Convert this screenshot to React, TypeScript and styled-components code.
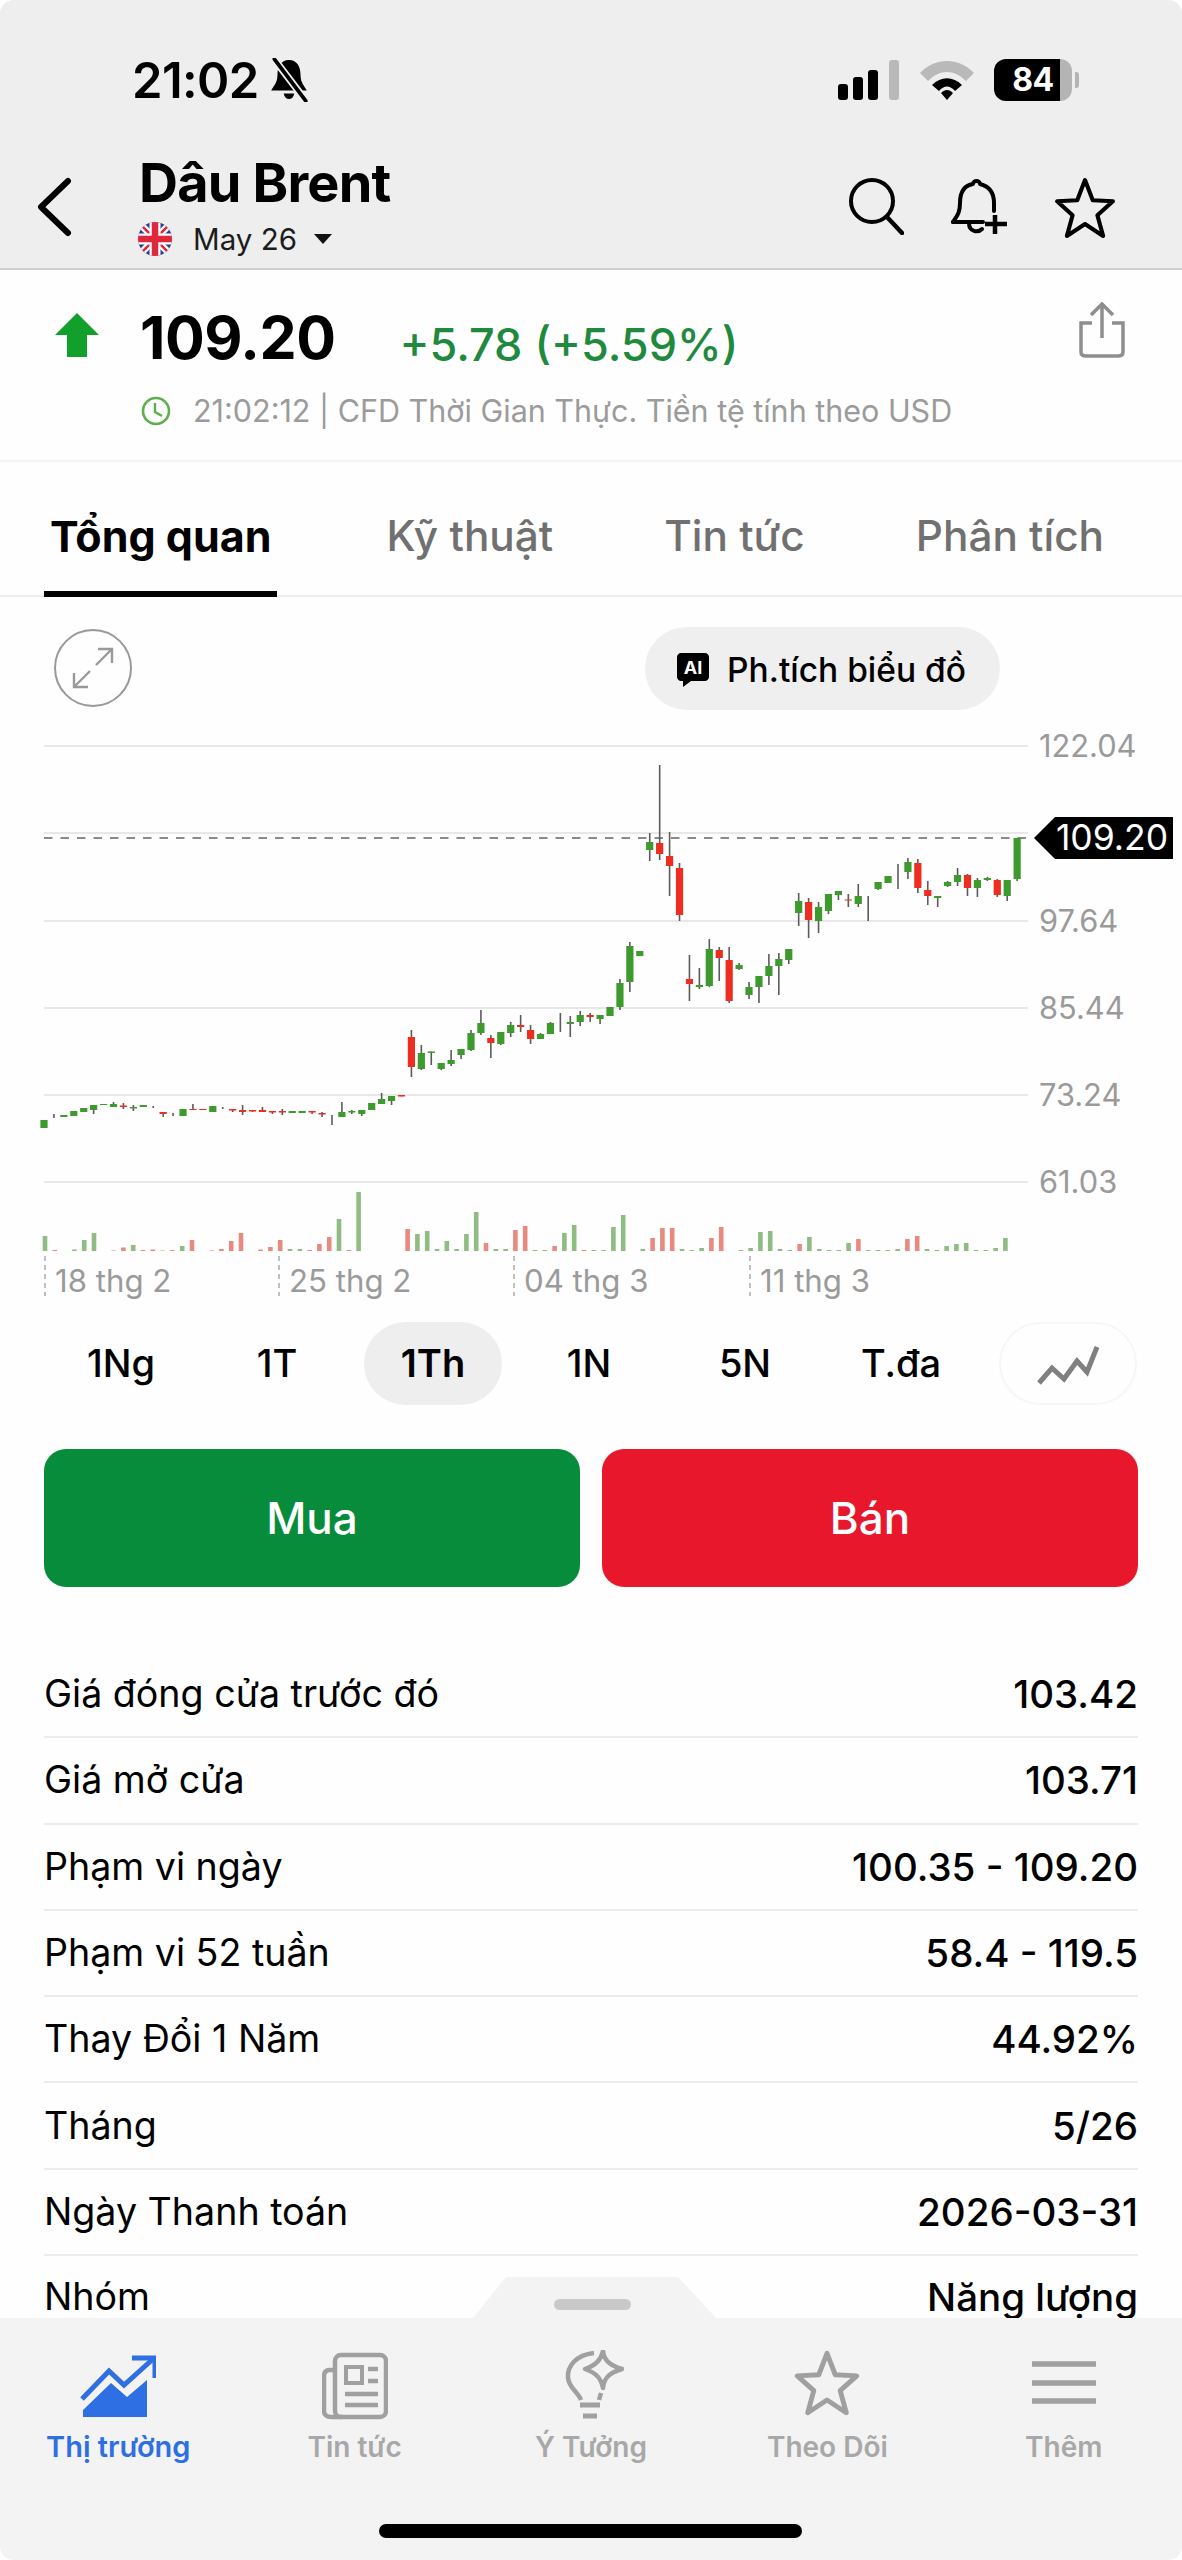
import React from 'react';
import styled, { createGlobalStyle } from 'styled-components';

const GlobalStyle = createGlobalStyle`
  html, body {
    margin: 0;
    padding: 0;
    background: #fff;
  }
  * {
    box-sizing: border-box;
  }
`;

const Screen = styled.div`
  position: relative;
  display: flex;
  flex-direction: column;
  width: 1182px;
  height: 2560px;
  overflow: hidden;
  background: #fefefe;
  border-radius: 14px;
  color: #000;
  font-family: Inter, 'Noto Sans', 'Liberation Sans', sans-serif;
`;

const TopBar = styled.header`
  flex: none;
  height: 270px;
  background: #eeeeef;
  border-bottom: 2px solid #cfcfcf;
`;

const StatusBar = styled.div`
  display: flex;
  align-items: center;
  justify-content: space-between;
  height: 160px;
  padding: 0 110px 0 132px;
`;

const StatusTime = styled.div`
  display: flex;
  align-items: center;
  gap: 8px;
  font-size: 49px;
  font-weight: 600;
  letter-spacing: -0.6px;
`;

const StatusIcons = styled.div`
  display: flex;
  align-items: center;
  gap: 20px;
`;

const Battery = styled.div`
  position: relative;
  width: 78px;
  height: 42px;
  border-radius: 12px;
  background: linear-gradient(90deg, #000 84%, #b4b4b4 84%);
  color: #fff;
  font-size: 32px;
  font-weight: 700;
  line-height: 42px;
  text-align: center;
  letter-spacing: -0.5px;

  &::after {
    content: '';
    position: absolute;
    top: 13px;
    right: -7px;
    width: 4px;
    height: 16px;
    border-radius: 0 3px 3px 0;
    background: #b4b4b4;
  }
`;

const HeaderRow = styled.div`
  display: flex;
  align-items: flex-start;
  height: 108px;
  padding-left: 36px;
`;

const BackIcon = styled.svg`
  flex: none;
  margin-top: 17px;
`;

const TitleBlock = styled.div`
  flex: 1;
  margin-left: 67px;
`;

const Title = styled.h1`
  margin: -7px 0 0;
  font-size: 54px;
  font-weight: 700;
  line-height: 60px;
  letter-spacing: -0.8px;
`;

const Contract = styled.div`
  display: flex;
  align-items: center;
  height: 36px;
  margin-top: 8px;
  margin-left: -1px;
  color: #1c1c1c;
  font-size: 29.5px;
  gap: 21px;
`;

const Caret = styled.span`
  width: 0;
  height: 0;
  margin-left: -4px;
  border-left: 9px solid transparent;
  border-right: 9px solid transparent;
  border-top: 10px solid #111;
`;

const HeaderActions = styled.div`
  display: flex;
  align-items: flex-start;
  gap: 45px;
  margin-top: 17px;
  padding-right: 66px;
`;

const Quote = styled.section`
  flex: none;
  height: 192px;
  padding: 32px 56px 0 55px;
  border-bottom: 2px solid #f3f3f3;
`;

const PriceRow = styled.div`
  display: flex;
  align-items: flex-start;
`;

const Price = styled.div`
  margin: 1px 0 0 41px;
  font-size: 59px;
  font-weight: 700;
  line-height: 70px;
  letter-spacing: -0.5px;
`;

const Change = styled.div`
  flex: 1;
  margin: 13px 0 0 64px;
  color: #1f8a3e;
  font-size: 45px;
  font-weight: 500;
  line-height: 60px;
`;

const MetaRow = styled.div`
  display: flex;
  align-items: center;
  gap: 22px;
  margin: 18px 0 0 86px;
  color: #9b9b9b;
  font-size: 30.5px;
  line-height: 36px;
`;

const Tabs = styled.nav`
  flex: none;
  display: flex;
  gap: 99px;
  height: 135px;
  padding: 0 0 0 44px;
  border-bottom: 2px solid #ededed;
`;

const Tab = styled.div<{ $active?: boolean }>`
  height: 135px;
  margin-right: ${({ $active }) => ($active ? '4px' : '0')};
  padding: 48px ${({ $active }) => ($active ? '6px' : '6px')} 0 6px;
  border-bottom: 6px solid ${({ $active }) => ($active ? '#000' : 'transparent')};
  color: ${({ $active }) => ($active ? '#000' : '#707070')};
  font-size: ${({ $active }) => ($active ? '43px' : '42.3px')};
  font-weight: ${({ $active }) => ($active ? 700 : 500)};
  line-height: 52px;
`;

const ChartTools = styled.div`
  flex: none;
  display: flex;
  align-items: center;
  justify-content: space-between;
  height: 86px;
  margin: 28px 0 9px;
  padding: 0 182px 0 54px;
`;

const ExpandButton = styled.div`
  display: flex;
  align-items: center;
  justify-content: center;
  width: 78px;
  height: 78px;
  border: 2px solid #999;
  border-radius: 50%;
`;

const AiButton = styled.div`
  display: flex;
  align-items: center;
  gap: 18px;
  height: 83px;
  padding: 4px 34px 0 32px;
  border-radius: 42px;
  background: #efefef;
  font-size: 33.5px;
  font-weight: 500;
`;

const ChartArea = styled.div`
  position: relative;
  flex: none;
  height: 580px;
`;

const ChartSvg = styled.svg`
  display: block;
`;

const PriceTag = styled.div`
  position: absolute;
  top: 97px;
  right: 9px;
  width: 118px;
  height: 42px;
  padding-right: 4px;
  background: #000;
  color: #fff;
  font-size: 35.5px;
  line-height: 42px;
  text-align: center;

  &::before {
    content: '';
    position: absolute;
    top: 0;
    left: -21px;
    border-top: 21px solid transparent;
    border-bottom: 21px solid transparent;
    border-right: 21px solid #000;
  }
`;

const Periods = styled.div`
  flex: none;
  display: grid;
  grid-template-columns: repeat(7, 138px);
  column-gap: 18px;
  align-items: center;
  height: 83px;
  margin-top: 22px;
  padding-left: 52px;
`;

const Period = styled.div<{ $active?: boolean }>`
  height: 83px;
  border-radius: 42px;
  background: ${({ $active }) => ($active ? '#eeeeee' : 'transparent')};
  font-size: 38px;
  font-weight: ${({ $active }) => ($active ? 600 : 500)};
  line-height: 83px;
  text-align: center;
`;

const ChartType = styled.div`
  display: flex;
  align-items: center;
  justify-content: center;
  width: 138px;
  height: 83px;
  margin-left: 11px;
  border: 2px solid #f6f6f6;
  border-radius: 42px;
`;

const Actions = styled.div`
  flex: none;
  display: grid;
  grid-template-columns: 1fr 1fr;
  gap: 22px;
  margin-top: 44px;
  padding: 0 44px;
`;

const TradeButton = styled.div<{ $color: string }>`
  height: 138px;
  border-radius: 22px;
  background: ${({ $color }) => $color};
  color: #fff;
  font-size: 44px;
  font-weight: 500;
  line-height: 138px;
  text-align: center;
`;

const Stats = styled.dl`
  flex: 1;
  margin: 65px 0 0;
  padding: 0 44px;
  overflow: hidden;
`;

const StatRow = styled.div`
  display: flex;
  align-items: center;
  justify-content: space-between;
  height: 86.3px;
  border-bottom: 2px solid #ececec;
  line-height: 38px;

  &:last-child {
    height: 60px;
    padding-top: 22px;
    border-bottom: none;
  }
`;

const StatLabel = styled.dt`
  font-size: 37.6px;
  font-weight: 400;
`;

const StatValue = styled.dd`
  margin: 0;
  font-size: 38.5px;
  font-weight: 500;
`;

const BottomNav = styled.footer`
  position: relative;
  flex: none;
  display: grid;
  grid-template-columns: repeat(5, 1fr);
  height: 242px;
  padding-top: 32px;
  background: #f3f3f3;
`;

const Handle = styled.div`
  position: absolute;
  top: -41px;
  left: 473px;
  width: 243px;
  height: 41px;
  background: #f3f3f3;
  clip-path: polygon(33px 0, 205px 0, 243px 100%, 0 100%);

  &::after {
    content: '';
    position: absolute;
    top: 22px;
    left: 81px;
    width: 77px;
    height: 11px;
    border-radius: 6px;
    background: #c9c9c9;
  }
`;

const NavItem = styled.div<{ $active?: boolean }>`
  display: flex;
  flex-direction: column;
  align-items: center;
  color: ${({ $active }) => ($active ? '#2f6fe4' : '#a8a8a8')};
  font-size: ${({ $active }) => ($active ? '29px' : '28px')};
  font-weight: 600;
`;

const NavIcon = styled.svg`
  display: block;
`;

const NavStar = styled.div`
  height: 70px;
`;

const NavLabel = styled.span`
  margin-top: 11px;
  line-height: 32px;
`;

const HomeIndicator = styled.div`
  position: absolute;
  bottom: 22px;
  left: 379px;
  width: 423px;
  height: 14px;
  border-radius: 7px;
  background: #000;
`;

// top, bottom, high, low of each candle in page pixels, g/r/k = green, red, wick only
type Candle = [number, number, number, number, 'g' | 'r' | 'k'];

const candles: Candle[] = [
  [1120, 1128, 1120, 1128, 'g'], [1115, 1117, 1114, 1118, 'k'], [1115, 1117, 1115, 1117, 'g'], [1111, 1116, 1111, 1116, 'g'],
  [1108, 1112, 1108, 1112, 'g'], [1105, 1110, 1105, 1114, 'g'], [1104, 1105, 1104, 1105, 'g'], [1104, 1107, 1102, 1107, 'g'],
  [1105.5, 1107, 1103, 1109, 'r'], [1107, 1108.5, 1105, 1111, 'g'], [1105, 1107, 1105, 1107, 'g'], [1106, 1108, 1106, 1108, 'k'],
  [1112, 1114, 1112, 1117, 'r'], [1113, 1116, 1113, 1116, 'k'], [1109, 1116, 1109, 1116, 'g'], [1109, 1110, 1104, 1110, 'r'],
  [1109, 1110, 1109, 1110, 'r'], [1106, 1112, 1106, 1112, 'g'], [1107, 1109, 1107, 1109, 'k'], [1109, 1110.5, 1109, 1112, 'r'],
  [1110, 1112, 1105, 1115, 'r'], [1110, 1111.5, 1110, 1112, 'r'], [1110, 1112, 1107, 1112, 'r'], [1111, 1112.5, 1111, 1114, 'r'],
  [1111, 1112.5, 1109, 1115, 'r'], [1111, 1113, 1111, 1113, 'g'], [1111, 1113, 1111, 1113, 'g'], [1111, 1112.5, 1111, 1114, 'r'],
  [1113, 1114.5, 1112, 1117, 'r'], [1115, 1116.5, 1115, 1125, 'k'], [1112, 1117, 1102, 1117, 'g'], [1111, 1112.5, 1110, 1114, 'g'],
  [1110, 1114, 1110, 1116, 'g'], [1103, 1110, 1103, 1110, 'g'], [1099, 1104, 1093, 1104, 'g'], [1096, 1101, 1096, 1105, 'g'],
  [1095, 1096.5, 1095, 1096.5, 'r'], [1037, 1067, 1030, 1077, 'r'], [1053, 1069, 1045, 1070, 'g'], [1051.5, 1053, 1051.5, 1065, 'g'],
  [1063, 1069, 1063, 1070, 'g'], [1060, 1064, 1050, 1066, 'g'], [1049, 1055, 1049, 1059, 'g'], [1033, 1050, 1030, 1051, 'g'],
  [1023, 1033, 1010, 1035, 'g'], [1038, 1043, 1035, 1058, 'r'], [1032, 1044, 1032, 1045, 'g'], [1025, 1033, 1022, 1037, 'g'],
  [1025, 1027, 1015, 1032, 'r'], [1030, 1039, 1025, 1044, 'r'], [1034, 1039, 1033, 1039, 'g'], [1023, 1034, 1022, 1034, 'g'],
  [1013, 1032, 1013, 1032, 'k'], [1022, 1024, 1016, 1037, 'g'], [1015, 1022, 1011, 1026, 'g'], [1015, 1017, 1013, 1022, 'r'],
  [1015, 1019, 1015, 1024, 'g'], [1007, 1016, 1007, 1016, 'g'], [983, 1007, 979, 1010, 'g'], [946, 982, 942, 992, 'g'],
  [951, 956, 951, 956, 'g'], [842, 850, 833, 861, 'g'], [843, 854, 765, 860, 'r'], [856, 866, 832, 896, 'r'],
  [868, 915, 863, 921, 'r'], [979, 984, 955, 1001, 'r'], [985, 987, 968, 989, 'g'], [949, 986, 939, 987, 'g'],
  [950, 958, 947, 981, 'r'], [960, 1001, 947, 1003, 'r'], [965, 969, 963, 970, 'g'], [987, 995, 982, 999, 'g'],
  [976, 987, 976, 1003, 'g'], [966, 976, 954, 985, 'g'], [959, 966, 953, 995, 'g'], [949, 960, 949, 964, 'g'],
  [901, 913, 893, 926, 'g'], [902, 920, 898, 938, 'r'], [907, 921, 902, 933, 'g'], [894, 911, 894, 914, 'g'],
  [891, 895, 891, 900, 'g'], [899.5, 900.5, 894, 907, 'r'], [896, 904, 884, 907, 'g'], [896, 921, 896, 921, 'k'],
  [882, 889, 882, 890, 'g'], [876, 883, 876, 883, 'g'], [864, 889, 864, 889, 'k'], [862, 872, 858, 879, 'g'],
  [863, 888, 859, 893, 'r'], [890, 896, 881, 905, 'r'], [896, 898, 896, 907, 'g'], [882, 886, 881, 887, 'g'],
  [875, 882, 868, 886, 'g'], [875, 888, 874, 896, 'r'], [880, 888, 878, 897, 'g'], [878, 880, 877, 881, 'g'],
  [880, 895, 879, 897, 'r'], [880, 896, 880, 901, 'g'], [838, 879, 838, 881, 'g'],
];

// volume bar index, height, colour
const volumes: [number, number, 'g' | 'r'][] = [
  [0, 15, 'g'], [1, 1, 'r'], [3, 1.5, 'g'], [4, 11, 'g'], [5, 18, 'g'], [7, 0.5, 'r'], [8, 3.5, 'r'], [9, 6, 'g'],
  [10, 1, 'r'], [11, 1.5, 'r'], [12, 0.5, 'g'], [13, 1, 'r'], [14, 5, 'g'], [15, 11, 'r'], [17, 0.5, 'r'], [18, 2, 'r'],
  [19, 10, 'r'], [20, 18, 'r'], [22, 1.5, 'r'], [23, 4, 'r'], [24, 11, 'r'], [25, 2, 'g'], [26, 2, 'g'], [27, 1, 'r'],
  [28, 7, 'r'], [29, 14, 'r'], [30, 32, 'g'], [31, 1, 'r'], [32, 59, 'g'], [37, 22, 'r'], [38, 17, 'g'], [39, 20, 'g'],
  [40, 2, 'g'], [41, 10, 'g'], [42, 2, 'g'], [43, 17, 'g'], [44, 39, 'g'], [45, 8, 'r'], [46, 2, 'g'], [47, 2, 'g'],
  [48, 21, 'r'], [49, 25, 'r'], [50, 1, 'g'], [51, 1, 'g'], [52, 5, 'r'], [53, 18, 'g'], [54, 26, 'g'], [55, 1, 'r'],
  [56, 1, 'g'], [57, 1, 'g'], [58, 24, 'g'], [59, 36, 'g'], [61, 2, 'g'], [62, 13, 'r'], [63, 23, 'r'], [64, 23, 'r'],
  [65, 2, 'g'], [66, 1, 'g'], [67, 3, 'g'], [68, 13, 'r'], [69, 24, 'r'], [71, 1, 'g'], [72, 3, 'g'], [73, 19, 'g'],
  [74, 20, 'g'], [75, 2, 'g'], [76, 1, 'g'], [77, 7, 'r'], [78, 14, 'g'], [79, 2, 'g'], [80, 1, 'g'], [81, 1, 'g'],
  [82, 8, 'g'], [83, 12, 'r'], [84, 1, 'g'], [85, 1, 'g'], [86, 1, 'g'], [87, 2, 'g'], [88, 12, 'r'], [89, 15, 'r'],
  [90, 2, 'g'], [91, 1, 'g'], [92, 5, 'g'], [93, 7, 'g'], [94, 8, 'g'], [95, 1, 'g'], [96, 1, 'g'], [97, 3, 'g'], [98, 13, 'g'],
];

const gridLines = [746, 833, 921, 1008, 1095, 1182];
const priceLabels: [string, number][] = [['122.04', 746], ['97.64', 921], ['85.44', 1008], ['73.24', 1095], ['61.03', 1182]];
const dateLabels: [string, number][] = [['18 thg 2', 45], ['25 thg 2', 279], ['04 thg 3', 514], ['11 thg 3', 750]];

const bodyColor = { g: '#3d9a2d', r: '#ee2c20', k: '#555' };
const volumeColor = { g: '#8fbc82', r: '#e88a80' };

const PriceChart = () => (
  <ChartSvg width={1182} height={580} viewBox="0 720 1182 580">
    {gridLines.map((y) => (
      <line key={y} x1={44} x2={1028} y1={y} y2={y} stroke="#e8e8e8" strokeWidth={2} />
    ))}
    <line x1={44} x2={1028} y1={838} y2={838} stroke="#8a8a8a" strokeWidth={2} strokeDasharray="8.5 8" />
    {candles.map(([top, bottom, high, low, color], i) => {
      const x = 44 + i * 9.93;
      return (
        <g key={i}>
          <line x1={x} x2={x} y1={high} y2={low} stroke="#5b5b5b" strokeWidth={1.6} />
          {color !== 'k' && <rect x={x - 3.6} y={top} width={7.2} height={bottom - top} fill={bodyColor[color]} />}
        </g>
      );
    })}
    {volumes.map(([k, h, color]) => (
      <rect key={k} x={45 + k * 9.8 - 2.3} y={1251 - h} width={4.6} height={h} fill={volumeColor[color]} />
    ))}
    {dateLabels.map(([label, x]) => (
      <g key={label}>
        <line x1={x} x2={x} y1={1256} y2={1296} stroke="#aaa" strokeWidth={1.5} strokeDasharray="5 4" />
        <text x={x + 10} y={1292} fill="#9a9a9a" fontSize={31.2}>{label}</text>
      </g>
    ))}
    {priceLabels.map(([label, y]) => (
      <text key={label} x={1039} y={y + 11} fill="#9a9a9a" fontSize={30.8}>{label}</text>
    ))}
  </ChartSvg>
);

const SignalIcon = () => (
  <svg width={62} height={40} viewBox="0 0 62 40">
    <rect x={0} y={24} width={10} height={16} rx={3} fill="#000" />
    <rect x={15} y={17} width={10} height={23} rx={3} fill="#000" />
    <rect x={30} y={10} width={10} height={30} rx={3} fill="#000" />
    <rect x={51} y={0} width={10} height={40} rx={3} fill="#b9b9b9" />
  </svg>
);

const WifiIcon = () => (
  <svg width={54} height={40} viewBox="0 0 54 40">
    <path d="M0 13 C15 -3 39 -3 54 13 L46 21 C34 9 20 9 8 21 Z" fill="#b9b9b9" />
    <path d="M12 25 C21 16 33 16 42 25 L35 31 C30 25 24 25 19 31 Z" fill="#000" />
    <path d="M21 33 C25 29 29 29 33 33 L27 40 Z" fill="#000" />
  </svg>
);

const SilentBell = () => (
  <svg width={44} height={44} viewBox="0 0 40 42">
    <path d="M20 2 C12 2 9 9 9 16 C9 24 5 27 3 31 L37 31 C35 27 31 24 31 16 C31 9 28 2 20 2 Z" fill="#000" />
    <path d="M15 34 C16 41 24 41 25 34 Z" fill="#000" />
    <line x1={5} y1={0} x2={37} y2={42} stroke="#eeeeef" strokeWidth={7} />
    <line x1={6} y1={1} x2={36} y2={41} stroke="#000" strokeWidth={3.5} strokeLinecap="round" />
  </svg>
);

const UkFlag = () => (
  <svg width={34} height={34} viewBox="0 0 34 34">
    <defs>
      <clipPath id="flag-circle">
        <circle cx={17} cy={17} r={17} />
      </clipPath>
    </defs>
    <g clipPath="url(#flag-circle)">
      <rect width={34} height={34} fill="#2a3f8f" />
      <path d="M0 0 L34 34 M34 0 L0 34" stroke="#fff" strokeWidth={7} />
      <path d="M0 0 L34 34 M34 0 L0 34" stroke="#e0283c" strokeWidth={2.5} />
      <path d="M17 0 V34 M0 17 H34" stroke="#fff" strokeWidth={11} />
      <path d="M17 0 V34 M0 17 H34" stroke="#e0283c" strokeWidth={6.5} />
    </g>
  </svg>
);

const StarOutline = ({ size, color, width }: { size: number; color: string; width: number }) => (
  <svg width={size} height={size} viewBox="0 0 60 60">
    <path
      d="M30 3 L37.5 22.5 L57 23.5 L42 37 L47.5 57 L30 45.5 L12.5 57 L18 37 L3 23.5 L22.5 22.5 Z"
      fill="none"
      stroke={color}
      strokeWidth={width}
      strokeLinejoin="round"
    />
  </svg>
);

const MarketIcon = () => (
  <NavIcon width={76} height={70} viewBox="0 0 76 70">
    <path d="M2 49 L29 21 L44 35 L73 9" fill="none" stroke="#2f6fe4" strokeWidth={5} />
    <path d="M52 8 H75 V28" fill="none" stroke="#2f6fe4" strokeWidth={5} />
    <path d="M3 67 V60 L31 33 L47 47 L67 30 V67 Z" fill="#2f6fe4" />
  </NavIcon>
);

const NewsIcon = () => (
  <NavIcon width={66} height={70} viewBox="0 0 66 70">
    <rect x={13} y={5} width={51} height={62} rx={6} fill="none" stroke="#a0a0a0" strokeWidth={4.5} />
    <path d="M13 20 H8 C4 20 2 22 2 26 V61 C2 65 5 67 9 67 H20" fill="none" stroke="#a0a0a0" strokeWidth={4.5} />
    <rect x={24} y={17} width={16} height={16} fill="none" stroke="#a0a0a0" strokeWidth={4} />
    <path d="M46 19 H56 M46 31 H56 M23 44 H56 M23 55 H56" stroke="#a0a0a0" strokeWidth={4.5} />
  </NavIcon>
);

const IdeaIcon = () => (
  <NavIcon width={66} height={70} viewBox="0 0 66 70">
    <path d="M36 3 C18 5 9 16 10 28 C11 38 20 42 23 50" fill="none" stroke="#a0a0a0" strokeWidth={4.5} />
    <path d="M45 1 C46 10 51 15 64 19 C51 23 46 28 45 38 C43 28 38 23 27 19 C38 15 43 10 45 1 Z" fill="none" stroke="#a0a0a0" strokeWidth={4.5} strokeLinejoin="round" />
    <path d="M43 43 L41 50" stroke="#a0a0a0" strokeWidth={4.5} />
    <path d="M22 55 H42 M25 66 H39" stroke="#a0a0a0" strokeWidth={5} />
  </NavIcon>
);

const MenuIcon = () => (
  <NavIcon width={64} height={70} viewBox="0 0 64 70">
    <path d="M0 14 H64 M0 33 H64 M0 51 H64" stroke="#a0a0a0" strokeWidth={5.5} />
  </NavIcon>
);

const stats = [
  ['Giá đóng cửa trước đó', '103.42'],
  ['Giá mở cửa', '103.71'],
  ['Phạm vi ngày', '100.35 - 109.20'],
  ['Phạm vi 52 tuần', '58.4 - 119.5'],
  ['Thay Đổi 1 Năm', '44.92%'],
  ['Tháng', '5/26'],
  ['Ngày Thanh toán', '2026-03-31'],
  ['Nhóm', 'Năng lượng'],
];

const App = () => (
  <Screen>
    <GlobalStyle />
    <TopBar>
      <StatusBar>
        <StatusTime>
          21:02
          <SilentBell />
        </StatusTime>
        <StatusIcons>
          <SignalIcon />
          <WifiIcon />
          <Battery>84</Battery>
        </StatusIcons>
      </StatusBar>
      <HeaderRow>
        <BackIcon width={36} height={60} viewBox="0 0 36 60">
          <path d="M32 4 L5 30 L32 56" fill="none" stroke="#000" strokeWidth={6} strokeLinecap="round" strokeLinejoin="round" />
        </BackIcon>
        <TitleBlock>
          <Title>Dâu Brent</Title>
          <Contract>
            <UkFlag />
            May 26
            <Caret />
          </Contract>
        </TitleBlock>
        <HeaderActions>
          <svg width={56} height={58} viewBox="0 0 56 58">
            <circle cx={24} cy={24} r={21} fill="none" stroke="#000" strokeWidth={4} />
            <path d="M39 40 L54 56" stroke="#000" strokeWidth={4.5} strokeLinecap="round" />
          </svg>
          <svg width={60} height={60} viewBox="0 0 60 60">
            <path d="M14 45 H4 C8 39 11 36 11 26 C11 12 18 8 24 7 C24 3 31 3 31 7 C39 9 45 14 45 26 V34" fill="none" stroke="#000" strokeWidth={4} strokeLinejoin="round" strokeLinecap="round" />
            <path d="M4 45 H34 M20 46 C20 55 29 56 33 52" fill="none" stroke="#000" strokeWidth={4} strokeLinecap="round" />
            <path d="M46 38 V57 M36 47 H58" stroke="#000" strokeWidth={4.5} />
          </svg>
          <StarOutline size={62} color="#000" width={4} />
        </HeaderActions>
      </HeaderRow>
    </TopBar>

    <Quote>
      <PriceRow>
        <svg width={44} height={44} viewBox="0 0 44 44" style={{ marginTop: 11 }}>
          <path d="M22 0 L44 22 H32 V44 H12 V22 H0 Z" fill="#12a02c" />
        </svg>
        <Price>109.20</Price>
        <Change>+5.78 (+5.59%)</Change>
        <svg width={48} height={56} viewBox="0 0 48 56">
          <path d="M24 36 V3 M13 13 L24 2 L35 13" fill="none" stroke="#8e8e8e" strokeWidth={3.5} />
          <path d="M14 21 H3 V50 C3 53 5 54 8 54 H40 C43 54 45 53 45 50 V21 H34" fill="none" stroke="#8e8e8e" strokeWidth={3.5} />
        </svg>
      </PriceRow>
      <MetaRow>
        <svg width={30} height={30} viewBox="0 0 30 30">
          <circle cx={15} cy={15} r={13} fill="none" stroke="#5fae4a" strokeWidth={2.6} />
          <path d="M14 7 V16 L21 20" fill="none" stroke="#5fae4a" strokeWidth={2.4} />
        </svg>
        21:02:12 | CFD Thời Gian Thực. Tiền tệ tính theo USD
      </MetaRow>
    </Quote>

    <Tabs>
      <Tab $active>Tổng quan</Tab>
      <Tab>Kỹ thuật</Tab>
      <Tab>Tin tức</Tab>
      <Tab>Phân tích</Tab>
    </Tabs>

    <ChartTools>
      <ExpandButton>
        <svg width={44} height={44} viewBox="0 0 44 44">
          <path d="M25 19 L41 3 M27 3 H41 V17 M19 25 L3 41 M3 27 V41 H17" fill="none" stroke="#999" strokeWidth={2.4} />
        </svg>
      </ExpandButton>
      <AiButton>
        <svg width={32} height={34} viewBox="0 0 32 34">
          <path d="M4 0 H28 C30 0 32 2 32 4 V24 C32 26 30 28 28 28 H14 L6 34 V28 H4 C2 28 0 26 0 24 V4 C0 2 2 0 4 0 Z" fill="#000" />
          <text x={16} y={21} fill="#fff" fontSize={18} fontWeight={700} textAnchor="middle">AI</text>
        </svg>
        Ph.tích biểu đồ
      </AiButton>
    </ChartTools>

    <ChartArea>
      <PriceChart />
      <PriceTag>109.20</PriceTag>
    </ChartArea>

    <Periods>
      <Period>1Ng</Period>
      <Period>1T</Period>
      <Period $active>1Th</Period>
      <Period>1N</Period>
      <Period>5N</Period>
      <Period>T.đa</Period>
      <ChartType>
        <svg width={62} height={44} viewBox="0 0 62 44">
          <path d="M2 41 L15 26 L27 37 L40 19 L50 30 L60 5" fill="none" stroke="#808080" strokeWidth={5} />
        </svg>
      </ChartType>
    </Periods>

    <Actions>
      <TradeButton $color="#078c3c">Mua</TradeButton>
      <TradeButton $color="#e8172c">Bán</TradeButton>
    </Actions>

    <Stats>
      {stats.map(([label, value]) => (
        <StatRow key={label}>
          <StatLabel>{label}</StatLabel>
          <StatValue>{value}</StatValue>
        </StatRow>
      ))}
    </Stats>

    <BottomNav>
      <Handle />
      <NavItem $active>
        <MarketIcon />
        <NavLabel>Thị trường</NavLabel>
      </NavItem>
      <NavItem>
        <NewsIcon />
        <NavLabel>Tin tức</NavLabel>
      </NavItem>
      <NavItem>
        <IdeaIcon />
        <NavLabel>Ý Tưởng</NavLabel>
      </NavItem>
      <NavItem>
        <NavStar>
          <StarOutline size={66} color="#a0a0a0" width={4.5} />
        </NavStar>
        <NavLabel>Theo Dõi</NavLabel>
      </NavItem>
      <NavItem>
        <MenuIcon />
        <NavLabel>Thêm</NavLabel>
      </NavItem>
      <HomeIndicator />
    </BottomNav>
  </Screen>
);

export default App;
